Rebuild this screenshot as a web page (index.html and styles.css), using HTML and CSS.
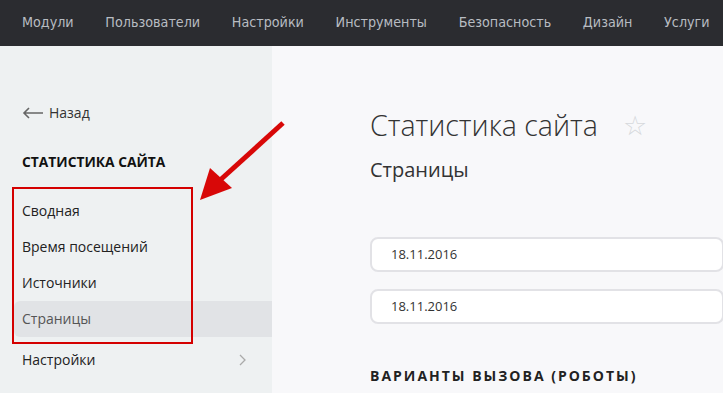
FILE: index.html
```html
<!DOCTYPE html>
<html lang="ru">
<head>
  <meta charset="UTF-8">
  <title>Статистика сайта</title>
  <link rel="stylesheet" href="styles.css">
</head>
<body>
  <div class="topbar">
    <a href="#">Модули</a>
    <a href="#">Пользователи</a>
    <a href="#">Настройки</a>
    <a href="#">Инструменты</a>
    <a href="#">Безопасность</a>
    <a href="#">Дизайн</a>
    <a href="#">Услуги</a>
  </div>

  <div class="page">
    <div class="sidebar">
      <a class="back" href="#">
        <svg width="22" height="12" viewBox="0 0 22 12"><path d="M21 6H2M7 1L2 6l5 5" fill="none" stroke="#666" stroke-width="1.6"/></svg>
        Назад
      </a>
      <div class="side-title">СТАТИСТИКА САЙТА</div>
      <ul class="side-menu">
        <li>Сводная</li>
        <li>Время посещений</li>
        <li>Источники</li>
        <li class="active">Страницы</li>
        <li class="has-sub">Настройки
          <svg width="7" height="12" viewBox="0 0 7 12"><path d="M1 1l5 5-5 5" fill="none" stroke="#aaa" stroke-width="1.3"/></svg>
        </li>
      </ul>
    </div>

    <div class="content">
      <h1>Статистика сайта <span class="star">&#9734;</span></h1>
      <h2>Страницы</h2>
      <div class="field">18.11.2016</div>
      <div class="field">18.11.2016</div>
      <h3>ВАРИАНТЫ ВЫЗОВА (РОБОТЫ)</h3>
    </div>
  </div>

  <!-- annotation on top of the screenshot -->
  <div class="mark-box"></div>
  <svg class="mark-arrow" width="100" height="90" viewBox="0 0 100 90">
    <line x1="89" y1="5" x2="24" y2="64" stroke="#d80808" stroke-width="5"/>
    <polygon points="6,82 16,50 38,70" fill="#d80808"/>
  </svg>
</body>
</html>
```

FILE: styles.css
```css
body {
  margin: 0;
  font-family: "Open Sans", Arial, sans-serif;
  background-color: #f8f8fa;
  color: #222;
  overflow: hidden;
}

.topbar {
  height: 46px;
  background-color: #2b2c30;
  display: flex;
  align-items: center;
  padding-left: 22px;
  gap: 31.7px;
  white-space: nowrap;
}

.topbar a {
  color: #b8bcc2;
  text-decoration: none;
  font-family: "Liberation Sans Narrow", "DejaVu Sans Condensed", sans-serif;
  font-size: 14.2px;
  margin-top: -2px;
}

.page {
  display: flex;
  height: 347px;
}

.sidebar {
  width: 272px;
  flex-shrink: 0;
  background-color: #eef1f2;
  padding-top: 57px;
  box-sizing: border-box;
}

.back {
  display: flex;
  align-items: center;
  gap: 5px;
  margin-left: 22px;
  color: #333;
  text-decoration: none;
  font-size: 14px;
}

.side-title {
  margin: 30px 0 0 22px;
  font-size: 13.8px;
  font-weight: bold;
  color: #111;
}

.side-menu {
  list-style: none;
  margin: 22px 0 0 0;
  padding: 0;
}

.side-menu li {
  height: 36px;
  line-height: 36px;
  margin-left: 14px;
  padding-left: 8px;
  font-size: 14px;
  color: #222;
  border-radius: 6px 0 0 6px;
}

.side-menu li.active {
  background-color: #e1e3e6;
  color: #555;
}

.side-menu li.has-sub {
  margin-top: 5px;
  display: flex;
  justify-content: space-between;
  align-items: center;
  padding-right: 26px;
}

.content {
  padding: 60px 0 0 98px;
  flex: 1;
}

h1 {
  margin: 0;
  font-weight: 300;
  font-size: 28.5px;
  color: #333;
  line-height: 38px;
}

.star {
  color: #d6d8dc;
  font-size: 27px;
  margin-left: 18px;
  vertical-align: 1px;
}

h2 {
  margin: 12px 0 0 0;
  font-weight: normal;
  font-size: 20px;
  color: #333;
}

.field {
  margin-top: 17px;
  height: 31px;
  line-height: 31px;
  border: 2px solid #e2e2e6;
  border-radius: 8px;
  background-color: #fff;
  padding-left: 19px;
  font-size: 13px;
  color: #333;
  margin-right: -1px;
}

.field:first-of-type {
  margin-top: 54px;
}

h3 {
  margin: 42px 0 0 0;
  font-size: 14px;
  letter-spacing: 2px;
  color: #222;
}

.mark-box {
  position: absolute;
  left: 12px;
  top: 187px;
  width: 177px;
  height: 153px;
  border: 2px solid #d40000;
}

.mark-arrow {
  position: absolute;
  left: 194px;
  top: 118px;
}
```
